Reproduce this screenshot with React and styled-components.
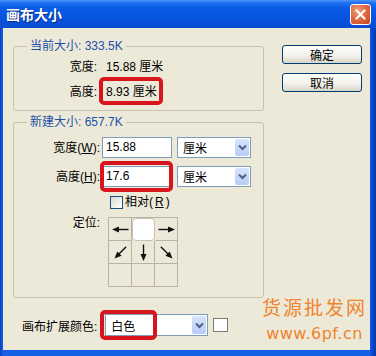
import React from 'react';
import styled, { createGlobalStyle } from 'styled-components';

const GlobalStyle = createGlobalStyle`
  html, body { margin: 0; padding: 0; background: #ece9d8; }
  body { font: 12px "Liberation Sans", "Noto Sans CJK SC", sans-serif; color: #000; }
`;

const Window = styled.div`
  width: 376px;
  height: 356px;
  display: flex;
  flex-direction: column;
  background: linear-gradient(90deg, #0a3fc4 0, #1660e6 3px, #1660e6 370px, #0846d8 372px, #0a3aa8 376px);
`;

const TitleBar = styled.div`
  height: 28px;
  flex: none;
  display: flex;
  align-items: center;
  justify-content: space-between;
  padding: 0 5px 0 6px;
  background: linear-gradient(#4a95fa 0, #1e6ff0 3px, #0a5ce8 8px, #0754e0 60%, #0a4dd2 100%);
`;

const Title = styled.div`
  color: #fff;
  font: bold 14px "Noto Sans CJK SC", sans-serif;
  text-shadow: 1px 1px 0 #0a2a86;
`;

const CloseButton = styled.div`
  width: 19px;
  height: 19px;
  border: 1px solid #fff;
  border-radius: 3px;
  display: flex;
  align-items: center;
  justify-content: center;
  background: radial-gradient(circle at 35% 30%, #f0a080 0, #e06a42 45%, #c8461e 100%);
`;

const Body = styled.div`
  flex: 1;
  position: relative;
  margin: 0 6px 6px 3px;
  padding: 11px 0 0 10px;
  background: #ece9d8;
  display: flex;
  flex-direction: column;
`;

const TopArea = styled.div`
  display: flex;
  gap: 18px;
`;

const LeftColumn = styled.div`
  display: flex;
  flex-direction: column;
  gap: 4px;
  width: 251px;
`;

const Group = styled.fieldset`
  margin: 0;
  padding: ${p => p.$pad};
  border: 1px solid #c6c2ae;
  border-radius: 3px;
  min-width: 0;
`;

const Legend = styled.legend`
  margin-left: 13px;
  padding: 0 3px;
  color: #2150a8;
  line-height: 14px;
  font-size: 12px;
`;

const Rows = styled.div`
  display: grid;
  grid-template-columns: ${p => p.$labelWidth} auto;
  column-gap: ${p => p.$colGap};
  row-gap: ${p => p.$rowGap};
  align-items: center;
`;

const Label = styled.div`
  text-align: right;
  line-height: ${p => p.$lh || '20px'};
  align-self: ${p => p.$top ? 'start' : 'center'};
  white-space: nowrap;
`;

const Value = styled.span`
  line-height: 20px;
  white-space: nowrap;
`;

const Mark = styled.span`
  position: relative;
  display: inline-flex;
  width: fit-content;
  &::after {
    content: '';
    position: absolute;
    inset: ${p => p.$inset};
    border: 4px solid #d8141c;
    border-radius: 5px;
    filter: blur(0.4px);
    pointer-events: none;
  }
`;

const Field = styled.div`
  display: flex;
  gap: 5px;
  align-items: center;
`;

const TextBox = styled.div`
  box-sizing: border-box;
  width: 70px;
  height: 21px;
  border: 1px solid #7f9db9;
  background: #fff;
  padding-left: 3px;
  line-height: 19px;
`;

const SelectBox = styled.div`
  box-sizing: border-box;
  width: ${p => p.$width};
  height: ${p => p.$height || '21px'};
  border: 1px solid #7f9db9;
  background: #fff;
  display: flex;
  align-items: center;
  justify-content: space-between;
  padding: 1px 1px 1px 5px;
`;

const DropButton = styled.div`
  width: 14px;
  height: 100%;
  border-radius: 2px;
  background: linear-gradient(#d8e3fc, #b7ccf6);
  display: flex;
  align-items: center;
  justify-content: center;
`;

const CheckRow = styled.label`
  display: flex;
  align-items: center;
  gap: 2px;
  margin-left: 8px;
  line-height: 14px;
`;

const CheckBox = styled.span`
  box-sizing: border-box;
  width: 13px;
  height: 13px;
  border: 1px solid #1c5180;
  background: linear-gradient(135deg, #d8d8d0, #fff);
`;

const AnchorGrid = styled.div`
  display: grid;
  grid-template-columns: repeat(3, 23px);
  grid-auto-rows: 23px;
  margin-left: 6px;
  border-top: 1px solid #b8b4a0;
  border-left: 1px solid #b8b4a0;
  width: fit-content;
`;

const Cell = styled.div`
  box-sizing: border-box;
  border-right: 1px solid #b8b4a0;
  border-bottom: 1px solid #b8b4a0;
  display: flex;
  align-items: center;
  justify-content: center;
  ${p => p.$active && `
    background: #fff;
    border-radius: 4px;
    border: 1px solid #c4c2b6;
  `}
`;

const ButtonColumn = styled.div`
  display: flex;
  flex-direction: column;
  gap: 9px;
  padding-top: 6px;
`;

const Button = styled.div`
  box-sizing: border-box;
  width: 80px;
  height: 19px;
  border: 1px solid #003c74;
  border-radius: 3px;
  background: linear-gradient(#ffffff, #f3f2ec 55%, #d9d5c8);
  display: flex;
  align-items: center;
  justify-content: center;
  font-family: "Noto Sans CJK SC", sans-serif;
  line-height: 17px;
`;

const BottomRow = styled.div`
  display: flex;
  align-items: center;
  gap: 5px;
  margin-top: 16px;
  padding-left: 9px;
`;

const BottomLabel = styled.span`
  margin-right: 3px;
`;

const Swatch = styled.div`
  box-sizing: border-box;
  width: 15px;
  height: 14px;
  border: 1px solid #7a7a7a;
  background: #fff;
`;

const Watermark = styled.div`
  position: absolute;
  right: 3px;
  bottom: 8px;
  color: #f0832c;
  display: flex;
  flex-direction: column;
  align-items: center;
`;

const WatermarkTitle = styled.div`
  font: 19px "Noto Sans CJK SC", sans-serif;
  letter-spacing: 2px;
  line-height: 22px;
`;

const WatermarkUrl = styled.div`
  font: 16px "DejaVu Sans", sans-serif;
  letter-spacing: 0.5px;
  line-height: 16px;
  margin-top: 8px;
`;

const Chevron = () => (
  <svg width="9" height="7" viewBox="0 0 9 7">
    <path d="M1 1.5 L4.5 5 L8 1.5" fill="none" stroke="#4d6185" strokeWidth="2" />
  </svg>
);

const Arrow = ({ angle }) => (
  <svg width="21" height="21" viewBox="0 0 21 21">
    <g transform={`rotate(${angle} 10.5 10.5)`}>
      <path d="M2.5 10.5 H13" stroke="#111" strokeWidth="1.4" />
      <polygon points="12,7.5 19,10.5 12,13.5" fill="#111" />
    </g>
  </svg>
);

const Select = ({ width, height, children }) => (
  <SelectBox $width={width} $height={height}>
    <span>{children}</span>
    <DropButton><Chevron /></DropButton>
  </SelectBox>
);

const anchors = [180, null, 0, 135, 90, 45, null, null, null];

export default function App() {
  return (
    <>
      <GlobalStyle />
      <Window>
        <TitleBar>
          <Title>画布大小</Title>
          <CloseButton>
            <svg width="11" height="11" viewBox="0 0 11 11">
              <path d="M1.5 1.5 L9.5 9.5 M9.5 1.5 L1.5 9.5" stroke="#fff" strokeWidth="2.2" strokeLinecap="round" />
            </svg>
          </CloseButton>
        </TitleBar>
        <Body>
          <TopArea>
            <LeftColumn>
              <Group $pad="4px 0 8px">
                <Legend>当前大小: 333.5K</Legend>
                <Rows $labelWidth="83px" $colGap="9px" $rowGap="5px">
                  <Label>宽度:</Label>
                  <Value>15.88 厘米</Value>
                  <Label>高度:</Label>
                  <Mark $inset="-5px -6px -3px -7px"><Value>8.93 厘米</Value></Mark>
                </Rows>
              </Group>
              <Group $pad="8px 0 10px">
                <Legend>新建大小: 657.7K</Legend>
                <Rows $labelWidth="86px" $colGap="2px" $rowGap="8px">
                  <Label>宽度(<u>W</u>):</Label>
                  <Field>
                    <TextBox>15.88</TextBox>
                    <Select width="74px">厘米</Select>
                  </Field>
                  <Label>高度(<u>H</u>):</Label>
                  <Field>
                    <Mark $inset="-5px -1px -5px -2px"><TextBox>17.6</TextBox></Mark>
                    <Select width="74px">厘米</Select>
                  </Field>
                  <span />
                  <CheckRow><CheckBox />相对(<u>R</u>)</CheckRow>
                  <Label $top $lh="12px">定位:</Label>
                  <AnchorGrid>
                    {anchors.map((a, i) => (
                      <Cell key={i} $active={i === 1}>
                        {a !== null && <Arrow angle={a} />}
                      </Cell>
                    ))}
                  </AnchorGrid>
                </Rows>
              </Group>
            </LeftColumn>
            <ButtonColumn>
              <Button>确定</Button>
              <Button>取消</Button>
            </ButtonColumn>
          </TopArea>
          <BottomRow>
            <BottomLabel>画布扩展颜色:</BottomLabel>
            <Mark $inset="-4px 51px -4px -5px">
              <Select width="103px" height="22px">白色</Select>
            </Mark>
            <Swatch />
          </BottomRow>
          <Watermark>
            <WatermarkTitle>货源批发网</WatermarkTitle>
            <WatermarkUrl>www.6pf.cn</WatermarkUrl>
          </Watermark>
        </Body>
      </Window>
    </>
  );
}
